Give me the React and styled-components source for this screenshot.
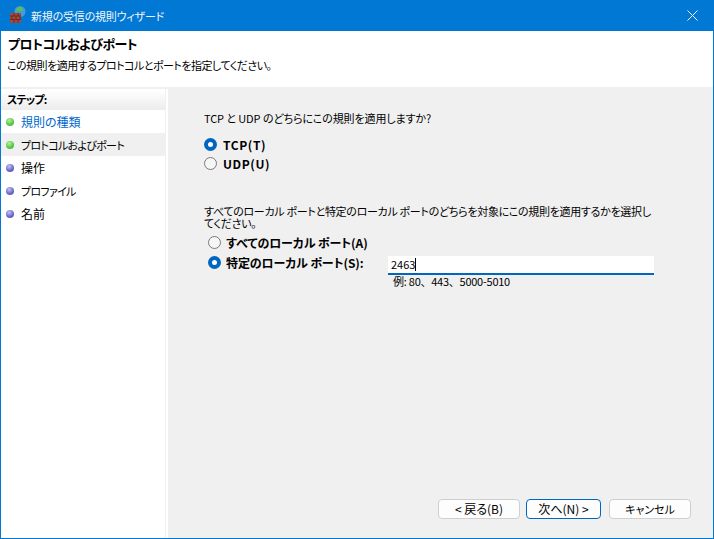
import styled, { createGlobalStyle } from 'styled-components';

const GlobalStyle = createGlobalStyle`
  html, body {
    margin: 0;
    padding: 0;
  }
  body {
    font-family: "Noto Sans CJK JP", "Liberation Sans", sans-serif;
    font-size: 11px;
    font-feature-settings: "palt";
    color: #000;
  }
`;

const Window = styled.div`
  width: 714px;
  height: 539px;
  box-sizing: border-box;
  border: 1px solid #0078d4;
  border-top: 0;
  display: flex;
  flex-direction: column;
  background: #fff;
  overflow: hidden;
`;
const TitleBar = styled.div`
  height: 31px;
  flex: none;
  margin: 0 -1px;
  background: #0078d4;
  color: #fff;
  display: flex;
  align-items: center;
  padding: 0 16px 0 9px;
  gap: 4px;
  font-size: 11px;
  letter-spacing: -0.2px;
`;
const TitleText = styled.span`
  flex: 1;
  opacity: 0.95;
`;
const Header = styled.div`
  height: 58px;
  flex: none;
  box-sizing: border-box;
  padding: 3px 0 0 6px;
  border-bottom: 2px solid #f0f0f0;
`;
const Heading = styled.div`
  font-size: 13px;
  font-weight: 700;
  line-height: 20px;
  letter-spacing: -0.5px;
  padding-left: 1px;
`;
const SubHeading = styled.div`
  font-size: 11px;
  line-height: 18px;
  margin-top: 2px;
  letter-spacing: -0.52px;
`;
const Body = styled.div`
  flex: 1;
  display: flex;
  min-height: 0;
`;
const Sidebar = styled.div`
  width: 164px;
  flex: none;
  margin-right: 2px;
  border-right: 1px solid #f0f0f0;
  box-sizing: content-box;
`;
const StepsTitle = styled.div`
  height: 20px;
  margin-top: 1px;
  padding-left: 6px;
  font-weight: 700;
  font-size: 11px;
  letter-spacing: -0.8px;
  line-height: 18px;
  background: linear-gradient(#fff, #ececec);
`;
const StepList = styled.div`
  display: flex;
  flex-direction: column;
`;
const Step = styled.div`
  height: 23px;
  display: flex;
  align-items: center;
  gap: 7px;
  padding-left: 5px;
  font-size: ${(p) => (p.$kanji ? 12 : 11)}px;
  letter-spacing: ${(p) => (p.$kanji ? 0 : -0.7)}px;
  color: ${(p) => (p.$link ? '#0066cc' : '#000')};
  background: ${(p) => (p.$active ? '#f0f0f0' : 'transparent')};
`;
const Dot = styled.span`
  width: 8px;
  height: 8px;
  border-radius: 50%;
  flex: none;
  background: ${(p) =>
    p.$done
      ? 'radial-gradient(circle at 40% 30%, #b4f0a0, #4cc23c 65%)'
      : 'radial-gradient(circle at 40% 30%, #c4c4f0, #5e5ec4 65%)'};
`;
const Main = styled.div`
  flex: 1;
  background: #f0f0f0;
  padding: 21px 0 0 36px;
  display: flex;
  flex-direction: column;
  position: relative;
`;
const Question = styled.div`
  font-size: 11px;
  line-height: 16px;
  letter-spacing: -0.1px;
`;
const Paragraph = styled.div`
  font-size: 11px;
  line-height: 12px;
  letter-spacing: -0.3px;
  width: 447px;
  margin-top: 35px;
`;
const RadioGroup = styled.div`
  display: flex;
  flex-direction: column;
  gap: 5px;
  margin-top: ${(p) => p.$top}px;
  padding-left: ${(p) => p.$indent}px;
`;
const RadioRow = styled.div`
  display: flex;
  align-items: center;
  height: 14px;
  gap: ${(p) => p.$gap}px;
  font-weight: 700;
  font-size: 12px;
  letter-spacing: ${(p) => (p.$wide ? 0.6 : -0.1)}px;
`;
const Radio = styled.span`
  width: 13px;
  height: 13px;
  box-sizing: border-box;
  border-radius: 50%;
  flex: none;
  background: ${(p) => (p.$on ? '#fff' : '#f6f6f6')};
  border: ${(p) => (p.$on ? '4px solid #0067c0' : '1px solid #7a7a7a')};
`;
const PortRow = styled(RadioRow)`
  height: 20px;
  margin-top: -2px;
`;
const PortLabel = styled.span`
  width: 157px;
  flex: none;
`;
const PortInput = styled.div`
  width: 266px;
  height: 19px;
  margin-top: 6px;
  flex: none;
  box-sizing: border-box;
  background: #fff;
  border-bottom: 2px solid #0067c0;
  font-weight: 400;
  font-size: 11px;
  letter-spacing: 0;
  line-height: 17px;
  padding-left: 3px;
  display: flex;
  align-items: center;
`;
const Caret = styled.span`
  width: 1px;
  height: 13px;
  background: #000;
`;
const Hint = styled.div`
  margin: 1px 0 0 189px;
  font-size: 11px;
  line-height: 16px;
  font-feature-settings: normal;
  letter-spacing: -0.25px;
`;
const Footer = styled.div`
  position: absolute;
  right: 22px;
  bottom: 19px;
  display: flex;
`;
const Button = styled.button`
  width: ${(p) => p.$w}px;
  height: 20px;
  margin-left: ${(p) => p.$gap}px;
  padding: 0;
  box-sizing: border-box;
  border-radius: 4px;
  background: #fdfdfd;
  border: 1px solid ${(p) => (p.$primary ? '#0067c0' : '#cfcfcf')};
  font-family: inherit;
  font-feature-settings: inherit;
  font-size: ${(p) => (p.$small ? 11 : 12)}px;
  color: #000;
  line-height: 18px;
`;

function FirewallIcon() {
  return (
    <svg width="18" height="19" viewBox="0 0 18 19">
      <circle cx="11" cy="5.5" r="5.5" fill="#3f9fd8" />
      <path d="M7 3.5c2-3 5-3 7-1l-1 3-3-1-2 1z" fill="#5cc04a" />
      <rect x="1" y="7" width="11" height="10" fill="#a8483a" />
      <path d="M1 10h11M1 13.5h11M5 7v3M9 7v3M3 10v3.5M7 10v3.5M11 10v3.5M5 13.5V17M9 13.5V17" stroke="#6e2a20" strokeWidth="1" fill="none" />
    </svg>
  );
}

function CloseIcon() {
  return (
    <svg width="11" height="11" viewBox="0 0 11 11">
      <path d="M0.5 0.5l10 10M10.5 0.5l-10 10" stroke="#fff" strokeWidth="1" fill="none" />
    </svg>
  );
}

export default function App() {
  return (
    <>
      <GlobalStyle />
      <Window>
        <TitleBar>
          <FirewallIcon />
          <TitleText>新規の受信の規則ウィザード</TitleText>
          <CloseIcon />
        </TitleBar>
        <Header>
          <Heading>プロトコルおよびポート</Heading>
          <SubHeading>この規則を適用するプロトコルとポートを指定してください。</SubHeading>
        </Header>
        <Body>
          <Sidebar>
            <StepsTitle>ステップ:</StepsTitle>
            <StepList>
              <Step $link $kanji><Dot $done />規則の種類</Step>
              <Step $active><Dot $done />プロトコルおよびポート</Step>
              <Step $kanji><Dot />操作</Step>
              <Step><Dot />プロファイル</Step>
              <Step $kanji><Dot />名前</Step>
            </StepList>
          </Sidebar>
          <Main>
            <Question>TCP と UDP のどちらにこの規則を適用しますか?</Question>
            <RadioGroup $top={11} $indent={0}>
              <RadioRow $gap={6} $wide><Radio $on />TCP(T)</RadioRow>
              <RadioRow $gap={6} $wide><Radio />UDP(U)</RadioRow>
            </RadioGroup>
            <Paragraph>
              すべてのローカル ポートと特定のローカル ポートのどちらを対象にこの規則を適用するかを選択してください。
            </Paragraph>
            <RadioGroup $top={6} $indent={4}>
              <RadioRow $gap={5}><Radio />すべてのローカル ポート(A)</RadioRow>
              <PortRow $gap={5}>
                <Radio $on />
                <PortLabel>特定のローカル ポート(S):</PortLabel>
                <PortInput>2463<Caret /></PortInput>
              </PortRow>
            </RadioGroup>
            <Hint>例: 80、443、5000-5010</Hint>
            <Footer>
              <Button $w={82} $gap={0}>&lt; 戻る(B)</Button>
              <Button $w={75} $gap={6} $primary>次へ(N) &gt;</Button>
              <Button $w={82} $gap={8} $small>キャンセル</Button>
            </Footer>
          </Main>
        </Body>
      </Window>
    </>
  );
}
